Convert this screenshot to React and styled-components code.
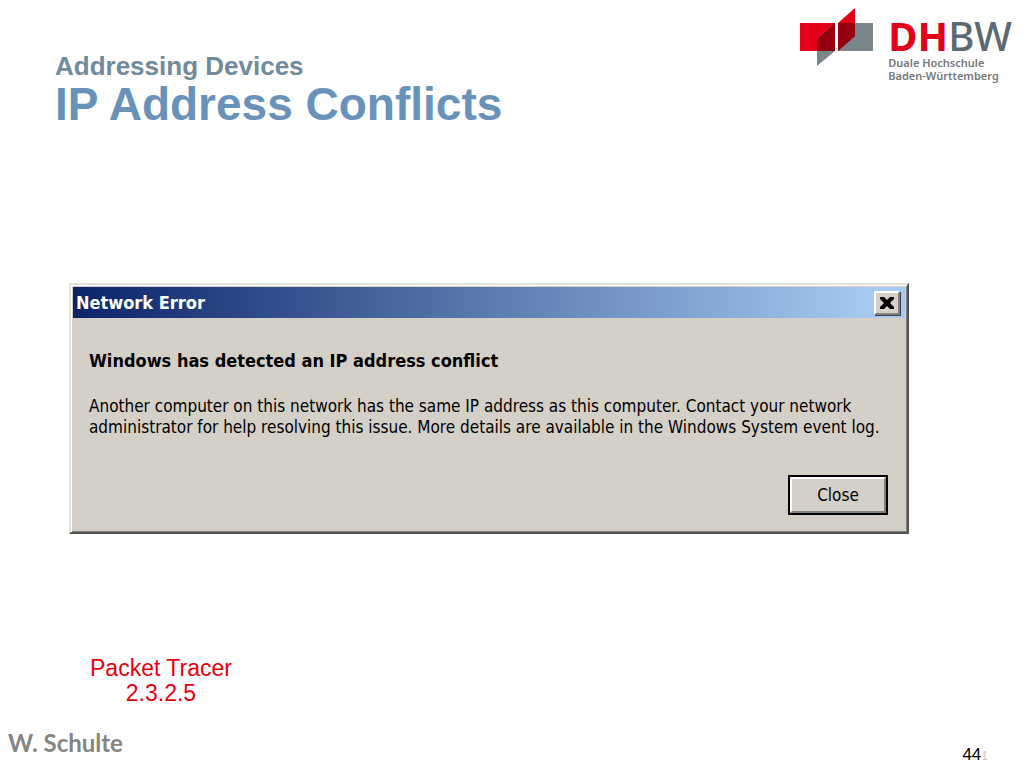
import React from "react";
import styled, { createGlobalStyle } from "styled-components";

const c_title = "#6992bb";
const c_subtitle = "#6f8b9d";
const c_face = "#d4d0c8";
const c_shadow = "#808080";
const c_brand_red = "#e2001a";
const c_brand_grey = "#5c6971";

const f_sans = `"Liberation Sans", Arial, sans-serif`;
const f_dialog = `"DejaVu Sans Condensed", Tahoma, sans-serif`;
const f_logo = `"Noto Sans", sans-serif`;

const GlobalStyle = createGlobalStyle`
  * {
    box-sizing: border-box;
  }

  body {
    background-color: white;
    font-family: ${f_sans};
    margin: 0;
  }
`;

const Slide = styled.main`
  display: flex;
  flex-direction: column;
  min-height: 100vh;
`;

const Header = styled.header`
  align-items: flex-start;
  display: flex;
  justify-content: space-between;
  padding: 6px 12px 0 55px;
`;

const Title = styled.h1`
  color: ${c_title};
  font-size: 46px;
  line-height: 48px;
  margin: 46px 0 0;
`;

const Subtitle = styled.small`
  color: ${c_subtitle};
  display: block;
  font-size: 26px;
  line-height: 28px;
`;

const Logo = styled.div`
  display: flex;
  gap: 14px;

  svg {
    height: 62px;
    width: 76px;
  }
`;

const LogoText = styled.div`
  color: ${c_brand_grey};
  font-family: ${f_logo};
  padding-top: 10px;
`;

const LogoName = styled.div`
  font-size: 40px;
  font-weight: 500;
  line-height: 40px;

  b {
    color: ${c_brand_red};
  }
`;

const LogoCaption = styled.div`
  color: #75797c;
  font-size: 11px;
  font-weight: 600;
  line-height: 13px;
`;

const Dialog = styled.section`
  background-color: ${c_face};
  border: 2px solid;
  border-color: #e4e2dc #55534f #55534f #e4e2dc;
  box-shadow: inset 1px 1px white, inset -1px -1px ${c_shadow};
  font-family: ${f_dialog};
  margin: 155px 115px 0 69px;
  padding: 2px;
`;

const TitleBar = styled.div`
  align-items: center;
  background: linear-gradient(to right, #0a246a, #a6caf0 96%);
  color: white;
  display: flex;
  height: 31px;
  justify-content: space-between;
  padding: 0 5px 0 3px;
`;

const DialogTitle = styled.h2`
  font-size: 18px;
  line-height: 24px;
  margin: 0;
`;

const RaisedButton = styled.button`
  background-color: ${c_face};
  border: 2px solid;
  border-color: white ${c_shadow} ${c_shadow} white;
  color: black;
  font-family: inherit;
  font-size: 17px;
  padding: 0;
`;

const CloseIconButton = styled(RaisedButton)`
  align-items: center;
  box-shadow: 1px 1px #404040;
  display: flex;
  height: 24px;
  justify-content: center;
  width: 26px;

  svg {
    height: 14px;
    width: 16px;
  }
`;

const CloseButton = styled(RaisedButton)`
  box-shadow: 0 0 0 2px black;
  height: 36px;
  width: 96px;
`;

const DialogBody = styled.div`
  padding: 31px 19px 17px 16px;
`;

const Heading = styled.h3`
  font-size: 18px;
  line-height: 24px;
  margin: 0 0 23px;
`;

const Message = styled.p`
  font-size: 17px;
  line-height: 21px;
  margin: 0 0 39px;
`;

const Actions = styled.div`
  display: flex;
  justify-content: flex-end;
`;

const Exercise = styled.p`
  align-self: flex-start;
  color: #e8000d;
  font-size: 23px;
  line-height: 25px;
  margin: 122px 0 0 90px;
  text-align: center;
`;

const Footer = styled.footer`
  align-items: flex-end;
  display: flex;
  justify-content: space-between;
  margin-top: auto;
  padding: 0 36px 2px 8px;
`;

const Author = styled.span`
  color: #858585;
  font-family: Lato, sans-serif;
  font-size: 24px;
  font-weight: bold;
  line-height: 46px;
`;

const PageNumber = styled.span`
  font-size: 17px;
  line-height: 20px;

  span {
    color: #c8c8c8;
    font-size: 12px;
  }
`;

const LogoMark = () => (
  <svg viewBox="0 0 76 62" aria-hidden="true">
    <path d="M2 17H37V45H2Z" fill="#e2001a" />
    <path d="M40 17H75V45H40Z" fill="#7b868c" />
    <path d="M19 33L37 17V45L19 60Z" fill="#7b868c" />
    <path d="M40 17L57 2V30L40 45Z" fill="#e2001a" />
    <path d="M19 33L37 17V45H19Z" fill="#94000d" />
    <path d="M40 17H57V30L40 45Z" fill="#94000d" />
  </svg>
);

const Cross = () => (
  <svg viewBox="0 0 16 14" aria-hidden="true">
    <path
      d="M1 1H5L8 4L11 1H15V3L11 7L15 11V13H11L8 10L5 13H1V11L5 7L1 3Z"
      fill="black"
    />
  </svg>
);

export default () => (
  <>
    <GlobalStyle />
    <Slide>
      <Header>
        <Title>
          <Subtitle>Addressing Devices</Subtitle>
          IP Address Conflicts
        </Title>
        <Logo>
          <LogoMark />
          <LogoText>
            <LogoName>
              <b>DH</b>BW
            </LogoName>
            <LogoCaption>
              Duale Hochschule
              <br />
              Baden-Württemberg
            </LogoCaption>
          </LogoText>
        </Logo>
      </Header>
      <Dialog role="dialog" aria-labelledby="dialog-title">
        <TitleBar>
          <DialogTitle id="dialog-title">Network Error</DialogTitle>
          <CloseIconButton type="button" aria-label="Close">
            <Cross />
          </CloseIconButton>
        </TitleBar>
        <DialogBody>
          <Heading>Windows has detected an IP address conflict</Heading>
          <Message>
            Another computer on this network has the same IP address as this
            computer. Contact your network administrator for help resolving this
            issue. More details are available in the Windows System event log.
          </Message>
          <Actions>
            <CloseButton type="button">Close</CloseButton>
          </Actions>
        </DialogBody>
      </Dialog>
      <Exercise>
        Packet Tracer
        <br />
        2.3.2.5
      </Exercise>
      <Footer>
        <Author>W. Schulte</Author>
        <PageNumber>
          44<span>1</span>
        </PageNumber>
      </Footer>
    </Slide>
  </>
);
